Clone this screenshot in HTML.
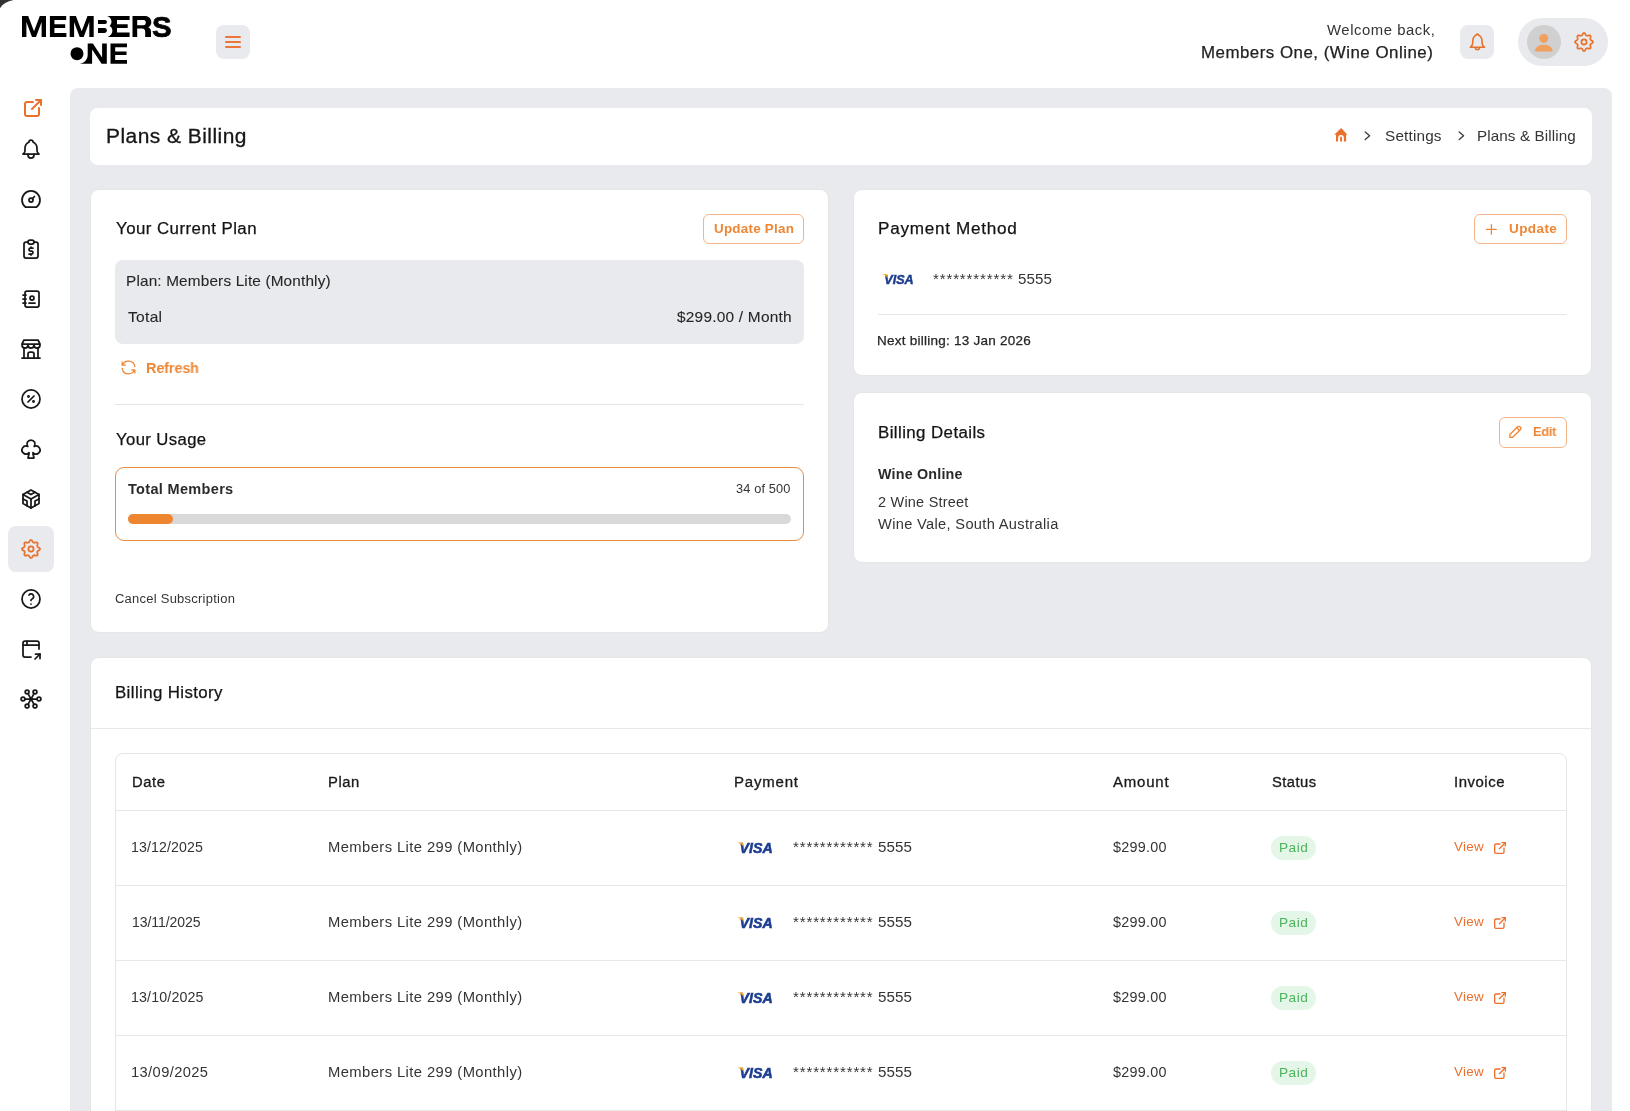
<!DOCTYPE html><html><head><meta charset="utf-8"><style>
html,body{margin:0;padding:0;}
body{width:1630px;height:1111px;overflow:hidden;position:relative;background:#fff;font-family:"Liberation Sans",sans-serif;}
.t{position:absolute;white-space:nowrap;font-family:"Liberation Sans",sans-serif;will-change:transform;}
.ic{position:absolute;overflow:visible;}
.box{position:absolute;box-sizing:border-box;}
</style></head><body>
<svg style="position:absolute;left:0;top:0;width:20px;height:12px" viewBox="0 0 20 12"><path d="M0 0H13.5C7 1.2 2.5 4 0 8.3Z" fill="#333"/></svg>
<div class="box" style="left:70px;top:88px;width:1542px;height:1100px;background:#E9EAEE;border-radius:8px;"></div>
<div class="box" style="left:90px;top:108px;width:1502px;height:57px;background:#fff;border-radius:8px;"></div>
<div class="box" style="left:90px;top:189px;width:739px;height:444px;background:#fff;border:1px solid #E6E6E6;border-radius:9px;"></div>
<div class="box" style="left:853px;top:189px;width:739px;height:187px;background:#fff;border:1px solid #E6E6E6;border-radius:9px;"></div>
<div class="box" style="left:853px;top:392px;width:739px;height:171px;background:#fff;border:1px solid #E6E6E6;border-radius:9px;"></div>
<div class="box" style="left:90px;top:657px;width:1502px;height:600px;background:#fff;border:1px solid #E6E6E6;border-radius:9px;"></div>
<div class="box" style="left:91px;top:728px;width:1500px;height:1px;background:#E8E8E8;"></div>
<div class="box" style="left:115px;top:753px;width:1452px;height:600px;border:1px solid #E6E6E6;border-radius:8px;"></div>
<div class="box" style="left:116px;top:810px;width:1450px;height:1px;background:#E8E8E8;"></div>
<div class="box" style="left:116px;top:885px;width:1450px;height:1px;background:#E8E8E8;"></div>
<div class="box" style="left:116px;top:960px;width:1450px;height:1px;background:#E8E8E8;"></div>
<div class="box" style="left:116px;top:1035px;width:1450px;height:1px;background:#E8E8E8;"></div>
<div class="box" style="left:116px;top:1110px;width:1450px;height:1px;background:#E8E8E8;"></div>
<div class="box" style="left:216px;top:25px;width:34px;height:34px;background:#E9EAEE;border-radius:8px;"></div>
<div class="box" style="left:225.3px;top:36px;width:15.5px;height:2px;background:#EA7639;border-radius:1px;"></div>
<div class="box" style="left:225.3px;top:41px;width:15.5px;height:2px;background:#EA7639;border-radius:1px;"></div>
<div class="box" style="left:225.3px;top:46px;width:15.5px;height:2px;background:#EA7639;border-radius:1px;"></div>
<div class="box" style="left:1460px;top:25px;width:34px;height:34px;background:#E9EAEE;border-radius:8px;"></div>
<svg class="ic" style="left:1467px;top:32px;width:20px;height:20px" viewBox="0 0 20 20" fill="none" stroke="#E9712B" stroke-width="1.6" stroke-linecap="round" stroke-linejoin="round"><path d="M10.40 2.00 C8.80 3.14 7.12 4.09 6.45 5.80 C5.70 7.61 5.61 9.31 5.61 11.69 C5.61 13.21 4.35 14.16 3.34 15.30 H17.46 C16.45 14.16 15.19 13.21 15.19 11.69 C15.19 9.31 15.10 7.61 14.35 5.80 C13.68 4.09 12.00 3.14 10.40 2.00 Z"/><path d="M8.05 15.49 C8.38 16.91 9.22 17.67 10.40 17.67 C11.58 17.67 12.42 16.91 12.75 15.49"/></svg>
<div class="box" style="left:1518px;top:18px;width:90px;height:48px;background:#E9EAEE;border-radius:24px;"></div>
<div class="box" style="left:1527px;top:25px;width:34px;height:34px;background:#D0D0D0;border-radius:50%;"></div>
<svg class="ic" style="left:1534px;top:32px;width:20px;height:20px" viewBox="0 0 20 20"><circle cx="9.8" cy="6.4" r="4.5" fill="#F0A05E"/><path d="M1 19.4C1 15 4.6 12.7 9.8 12.7S18.6 15 18.6 19.4Z" fill="#F0A05E"/></svg>
<svg class="ic" style="left:1572px;top:30px;width:24px;height:24px" viewBox="0 0 24 24" fill="none" stroke="#E9712B" stroke-width="1.7" stroke-linecap="round" stroke-linejoin="round"><path d="M12.00 3.00L12.35 3.07L12.69 3.28L12.99 3.60L13.27 3.99L13.51 4.40L13.73 4.78L13.95 5.10L14.16 5.34L14.39 5.51L14.64 5.63L14.90 5.72L15.18 5.76L15.50 5.74L15.88 5.67L16.31 5.55L16.77 5.44L17.23 5.36L17.68 5.35L18.06 5.44L18.36 5.64L18.56 5.94L18.65 6.32L18.64 6.77L18.56 7.23L18.45 7.69L18.33 8.12L18.26 8.50L18.24 8.82L18.28 9.10L18.37 9.36L18.49 9.61L18.66 9.84L18.90 10.05L19.22 10.27L19.60 10.49L20.01 10.73L20.40 11.01L20.72 11.31L20.93 11.65L21.00 12.00L20.93 12.35L20.72 12.69L20.40 12.99L20.01 13.27L19.60 13.51L19.22 13.73L18.90 13.95L18.66 14.16L18.49 14.39L18.37 14.64L18.28 14.90L18.24 15.18L18.26 15.50L18.33 15.88L18.45 16.31L18.56 16.77L18.64 17.23L18.65 17.68L18.56 18.06L18.36 18.36L18.06 18.56L17.68 18.65L17.23 18.64L16.77 18.56L16.31 18.45L15.88 18.33L15.50 18.26L15.18 18.24L14.90 18.28L14.64 18.37L14.39 18.49L14.16 18.66L13.95 18.90L13.73 19.22L13.51 19.60L13.27 20.01L12.99 20.40L12.69 20.72L12.35 20.93L12.00 21.00L11.65 20.93L11.31 20.72L11.01 20.40L10.73 20.01L10.49 19.60L10.27 19.22L10.05 18.90L9.84 18.66L9.61 18.49L9.36 18.37L9.10 18.28L8.82 18.24L8.50 18.26L8.12 18.33L7.69 18.45L7.23 18.56L6.77 18.64L6.32 18.65L5.94 18.56L5.64 18.36L5.44 18.06L5.35 17.68L5.36 17.23L5.44 16.77L5.55 16.31L5.67 15.88L5.74 15.50L5.76 15.18L5.72 14.90L5.63 14.64L5.51 14.39L5.34 14.16L5.10 13.95L4.78 13.73L4.40 13.51L3.99 13.27L3.60 12.99L3.28 12.69L3.07 12.35L3.00 12.00L3.07 11.65L3.28 11.31L3.60 11.01L3.99 10.73L4.40 10.49L4.78 10.27L5.10 10.05L5.34 9.84L5.51 9.61L5.63 9.36L5.72 9.10L5.76 8.82L5.74 8.50L5.67 8.12L5.55 7.69L5.44 7.23L5.36 6.77L5.35 6.32L5.44 5.94L5.64 5.64L5.94 5.44L6.32 5.35L6.77 5.36L7.23 5.44L7.69 5.55L8.12 5.67L8.50 5.74L8.82 5.76L9.10 5.72L9.36 5.63L9.61 5.51L9.84 5.34L10.05 5.10L10.27 4.78L10.49 4.40L10.73 3.99L11.01 3.60L11.31 3.28L11.65 3.07Z"/><circle cx="12" cy="12" r="2.6"/></svg>
<svg class="ic" style="left:0;top:0;width:200px;height:80px;will-change:transform" viewBox="0 0 200 80">
<g fill="#000">
<path d="M22 16h6.2l5.8 15.2l5.8-15.2h6.2v21h-4.4v-15l-5.6 15h-4l-5.6-15v15h-4.4z"/>
<path d="M49.9 16h16.3v3.9h-11.8v4.4h10.8v3.7h-10.8v5.1h12v3.9h-16.5z"/>
<path d="M69.7 16h6.2l5.8 15.2l5.8-15.2h6.2v21h-4.4v-15l-5.6 15h-4l-5.6-15v15h-4.4z"/>
<path d="M98 20.1H105A1.95 1.95 0 0 1 105 24H98Z"/>
<path d="M98 28.1H104.5A2.4 2.4 0 0 1 104.5 32.9H98Z"/>
<path d="M107 16H129.6V20.1H117V24.3H127.7V28H117V32.5H129.6V37H107.5C110.5 36 112.4 33.5 112.4 30.8C112.4 28.5 111.2 26.8 109.6 26C110.8 25 111.5 23.5 111.5 21.8C111.5 18.8 109.5 16.5 107 16Z"/>
</g>
<path fill-rule="evenodd" d="M132.5 16.1H144.5C148.8 16.1 151.3 18.8 151.3 22.2C151.3 24.6 150 26.4 148.2 27.3C150.1 28.1 151 29.6 151 31.8V36.9H145.2V32.2C145.2 29.9 144.4 28.6 141.8 28.6H137.2V36.9H132.5ZM137.2 20H143.8C145.2 20 145.8 21.2 145.8 22.6C145.8 24.1 145 25.3 143.6 25.3H137.2Z"/><text x="152" y="37" font-family="Liberation Sans" font-weight="700" font-size="29.2" fill="#000" stroke="#000" stroke-width="0.7" textLength="19.6" lengthAdjust="spacingAndGlyphs">S</text>
<circle cx="77" cy="53.7" r="6.5" fill="#000"/>
<path d="M87.7 43.4H92.9L102.1 57.4V43.4H106.8V63.8H101.6L92.1 49.6V63.8H80C84.6 63 87.7 59.3 87.7 54.8Z" fill="#000"/>
<path d="M110.5 43.4H127V47.3H115.2V51.4H126.5V55H115.2V60H127V63.8H110.5Z" fill="#000"/>
</svg>
<svg class="ic" style="left:21px;top:96px;width:24px;height:24px" viewBox="0 0 24 24" fill="none" stroke="#E9712B" stroke-width="2" stroke-linecap="round" stroke-linejoin="round"><path d="M12 6h-6a2 2 0 0 0 -2 2v10a2 2 0 0 0 2 2h10a2 2 0 0 0 2 -2v-6"/><path d="M11 13l9 -9"/><path d="M15 4h5v5"/></svg>
<div class="box" style="left:8px;top:526px;width:46px;height:46px;background:#E9EAEE;border-radius:8px;"></div>
<svg class="ic" style="left:19px;top:137px;width:24px;height:24px" viewBox="0 0 24 24" fill="none" stroke="#181818" stroke-width="1.75" stroke-linecap="round" stroke-linejoin="round"><path d="M10 5a2 2 0 1 1 4 0a7 7 0 0 1 4 6v3a4 4 0 0 0 2 3h-16a4 4 0 0 0 2 -3v-3a7 7 0 0 1 4 -6"/><path d="M9 17v1a3 3 0 0 0 6 0v-1"/></svg>
<svg class="ic" style="left:19px;top:187px;width:24px;height:24px" viewBox="0 0 24 24" fill="none" stroke="#181818" stroke-width="1.75" stroke-linecap="round" stroke-linejoin="round"><path d="M12 13m-2 0a2 2 0 1 0 4 0a2 2 0 1 0 -4 0"/><path d="M13.45 11.55l2.05 -2.05"/><path d="M6.4 20a9 9 0 1 1 11.2 0z"/></svg>
<svg class="ic" style="left:19px;top:237px;width:24px;height:24px" viewBox="0 0 24 24" fill="none" stroke="#181818" stroke-width="1.75" stroke-linecap="round" stroke-linejoin="round"><path d="M9 5h-2a2 2 0 0 0 -2 2v12a2 2 0 0 0 2 2h10a2 2 0 0 0 2 -2v-12a2 2 0 0 0 -2 -2h-2"/><path d="M9 5a2 2 0 0 1 2 -2h2a2 2 0 0 1 2 2v0a2 2 0 0 1 -2 2h-2a2 2 0 0 1 -2 -2z"/><path d="M14 11h-2.5a1.5 1.5 0 0 0 0 3h1a1.5 1.5 0 0 1 0 3h-2.5"/><path d="M12 17v1m0 -8v1"/></svg>
<svg class="ic" style="left:19px;top:287px;width:24px;height:24px" viewBox="0 0 24 24" fill="none" stroke="#181818" stroke-width="1.75" stroke-linecap="round" stroke-linejoin="round"><path d="M20 6v12a2 2 0 0 1 -2 2h-10a2 2 0 0 1 -2 -2v-12a2 2 0 0 1 2 -2h10a2 2 0 0 1 2 2z"/><path d="M10 16h6"/><path d="M13 11m-2 0a2 2 0 1 0 4 0a2 2 0 1 0 -4 0"/><path d="M4 8h3"/><path d="M4 12h3"/><path d="M4 16h3"/></svg>
<svg class="ic" style="left:19px;top:337px;width:24px;height:24px" viewBox="0 0 24 24" fill="none" stroke="#181818" stroke-width="1.75" stroke-linecap="round" stroke-linejoin="round"><path d="M3 21l18 0"/><path d="M3 7v1a3 3 0 0 0 6 0v-1m0 1a3 3 0 0 0 6 0v-1m0 1a3 3 0 0 0 6 0v-1h-18l2 -4h14l2 4"/><path d="M5 21l0 -10.15"/><path d="M19 21l0 -10.15"/><path d="M9 21v-4a2 2 0 0 1 2 -2h2a2 2 0 0 1 2 2v4"/></svg>
<svg class="ic" style="left:19px;top:387px;width:24px;height:24px" viewBox="0 0 24 24" fill="none" stroke="#181818" stroke-width="1.75" stroke-linecap="round" stroke-linejoin="round"><path d="M9 15l6 -6"/><circle cx="9.5" cy="9.5" r=".6" fill="currentColor"/><circle cx="14.5" cy="14.5" r=".6" fill="currentColor"/><path d="M12 12m-9 0a9 9 0 1 0 18 0a9 9 0 1 0 -18 0"/></svg>
<svg class="ic" style="left:19px;top:437px;width:24px;height:24px" viewBox="0 0 24 24" fill="none" stroke="#181818" stroke-width="1.75" stroke-linecap="round" stroke-linejoin="round"><path d="M12 3a4 4 0 0 1 3.164 6.447a4 4 0 1 1 -1.164 6.198v1.355l1 4h-6l1 -4l0 -1.355a4 4 0 1 1 -1.164 -6.199a4 4 0 0 1 3.163 -6.446z"/></svg>
<svg class="ic" style="left:19px;top:487px;width:24px;height:24px" viewBox="0 0 24 24" fill="none" stroke="#181818" stroke-width="1.75" stroke-linecap="round" stroke-linejoin="round"><path d="M20 7.5v9l-4 2.25l-4 2.25l-4 -2.25l-4 -2.25v-9l4 -2.25l4 -2.25l4 2.25z"/><path d="M12 12l4 -2.25l4 -2.25"/><path d="M12 12l0 9"/><path d="M12 12l-4 -2.25l-4 -2.25"/><path d="M20 12l-4 2v4.75"/><path d="M4 12l4 2l0 4.75"/><path d="M8 5.25l4 2.25l4 -2.25"/></svg>
<svg class="ic" style="left:19px;top:537px;width:24px;height:24px" viewBox="0 0 24 24" fill="none" stroke="#E9712B" stroke-width="1.75" stroke-linecap="round" stroke-linejoin="round"><path d="M12.00 3.00L12.35 3.07L12.69 3.28L12.99 3.60L13.27 3.99L13.51 4.40L13.73 4.78L13.95 5.10L14.16 5.34L14.39 5.51L14.64 5.63L14.90 5.72L15.18 5.76L15.50 5.74L15.88 5.67L16.31 5.55L16.77 5.44L17.23 5.36L17.68 5.35L18.06 5.44L18.36 5.64L18.56 5.94L18.65 6.32L18.64 6.77L18.56 7.23L18.45 7.69L18.33 8.12L18.26 8.50L18.24 8.82L18.28 9.10L18.37 9.36L18.49 9.61L18.66 9.84L18.90 10.05L19.22 10.27L19.60 10.49L20.01 10.73L20.40 11.01L20.72 11.31L20.93 11.65L21.00 12.00L20.93 12.35L20.72 12.69L20.40 12.99L20.01 13.27L19.60 13.51L19.22 13.73L18.90 13.95L18.66 14.16L18.49 14.39L18.37 14.64L18.28 14.90L18.24 15.18L18.26 15.50L18.33 15.88L18.45 16.31L18.56 16.77L18.64 17.23L18.65 17.68L18.56 18.06L18.36 18.36L18.06 18.56L17.68 18.65L17.23 18.64L16.77 18.56L16.31 18.45L15.88 18.33L15.50 18.26L15.18 18.24L14.90 18.28L14.64 18.37L14.39 18.49L14.16 18.66L13.95 18.90L13.73 19.22L13.51 19.60L13.27 20.01L12.99 20.40L12.69 20.72L12.35 20.93L12.00 21.00L11.65 20.93L11.31 20.72L11.01 20.40L10.73 20.01L10.49 19.60L10.27 19.22L10.05 18.90L9.84 18.66L9.61 18.49L9.36 18.37L9.10 18.28L8.82 18.24L8.50 18.26L8.12 18.33L7.69 18.45L7.23 18.56L6.77 18.64L6.32 18.65L5.94 18.56L5.64 18.36L5.44 18.06L5.35 17.68L5.36 17.23L5.44 16.77L5.55 16.31L5.67 15.88L5.74 15.50L5.76 15.18L5.72 14.90L5.63 14.64L5.51 14.39L5.34 14.16L5.10 13.95L4.78 13.73L4.40 13.51L3.99 13.27L3.60 12.99L3.28 12.69L3.07 12.35L3.00 12.00L3.07 11.65L3.28 11.31L3.60 11.01L3.99 10.73L4.40 10.49L4.78 10.27L5.10 10.05L5.34 9.84L5.51 9.61L5.63 9.36L5.72 9.10L5.76 8.82L5.74 8.50L5.67 8.12L5.55 7.69L5.44 7.23L5.36 6.77L5.35 6.32L5.44 5.94L5.64 5.64L5.94 5.44L6.32 5.35L6.77 5.36L7.23 5.44L7.69 5.55L8.12 5.67L8.50 5.74L8.82 5.76L9.10 5.72L9.36 5.63L9.61 5.51L9.84 5.34L10.05 5.10L10.27 4.78L10.49 4.40L10.73 3.99L11.01 3.60L11.31 3.28L11.65 3.07Z"/><circle cx="12" cy="12" r="2.6"/></svg>
<svg class="ic" style="left:19px;top:587px;width:24px;height:24px" viewBox="0 0 24 24" fill="none" stroke="#181818" stroke-width="1.75" stroke-linecap="round" stroke-linejoin="round"><path d="M12 12m-9 0a9 9 0 1 0 18 0a9 9 0 1 0 -18 0"/><path d="M12 17l0 .01"/><path d="M12 13.5a1.5 1.5 0 0 1 1 -1.5a2.6 2.6 0 1 0 -3 -4"/></svg>
<svg class="ic" style="left:19px;top:637px;width:24px;height:24px" viewBox="0 0 24 24" fill="none" stroke="#181818" stroke-width="1.75" stroke-linecap="round" stroke-linejoin="round"><path d="M4 8h16"/><path d="M12 20h-6a2 2 0 0 1 -2 -2v-12a2 2 0 0 1 2 -2h12a2 2 0 0 1 2 2v6"/><path d="M8 4v4"/><path d="M16 22l5 -5"/><path d="M21 21.5v-4.5h-4.5"/></svg>
<svg class="ic" style="left:19px;top:687px;width:24px;height:24px" viewBox="0 0 24 24" fill="none" stroke="#181818" stroke-width="1.75" stroke-linecap="round" stroke-linejoin="round"><circle cx="8.1" cy="4.9" r="1.9"/><circle cx="16" cy="4.9" r="1.9"/><circle cx="4" cy="12" r="1.9"/><circle cx="20" cy="12" r="1.9"/><circle cx="8.1" cy="19.1" r="1.9"/><circle cx="16" cy="19.1" r="1.9"/><circle cx="12" cy="12" r="1"/><path d="M11.52 11.12L9.01 6.57"/><path d="M12.49 11.13L15.07 6.56"/><path d="M11.00 12.00L5.90 12.00"/><path d="M13.00 12.00L18.10 12.00"/><path d="M11.52 12.88L9.01 17.43"/><path d="M12.49 12.87L15.07 17.44"/></svg>
<svg class="ic" style="left:1333px;top:127px;width:16px;height:16px" viewBox="0 0 16 16"><path fill-rule="evenodd" d="M8.2 1L1.2 7.7H3V14.6H13.1V7.7H14.4ZM5.1 14.6V11A2.9 2.9 0 0 1 10.9 11V14.6ZM7.1 14.6V10.5A0.95 0.95 0 0 1 9 10.5V14.6Z" fill="#E9712B"/></svg>
<svg class="ic" style="left:1362px;top:131px;width:10px;height:10px" viewBox="0 0 10 10" fill="none" stroke="#3A3A3A" stroke-width="1.3" stroke-linecap="round" stroke-linejoin="round"><path d="M3.2 0.9L7.6 4.8L3.2 8.6"/></svg>
<svg class="ic" style="left:1456px;top:131px;width:10px;height:10px" viewBox="0 0 10 10" fill="none" stroke="#3A3A3A" stroke-width="1.3" stroke-linecap="round" stroke-linejoin="round"><path d="M3.2 0.9L7.6 4.8L3.2 8.6"/></svg>
<div class="box" style="left:703px;top:214px;width:101px;height:30px;border:1px solid #F4B48A;border-radius:6px;"></div>
<div class="box" style="left:115px;top:260px;width:689px;height:84px;background:#E9EAEE;border-radius:8px;"></div>
<svg class="ic" style="left:118.5px;top:358px;width:19px;height:19px" viewBox="0 0 24 24" fill="none" stroke="#EE8633" stroke-width="1.6" stroke-linecap="round" stroke-linejoin="round"><path d="M20 11a8.1 8.1 0 0 0 -15.5 -2m-.5 -4v4h4"/><path d="M4 13a8.1 8.1 0 0 0 15.5 2m.5 4v-4h-4"/></svg>
<div class="box" style="left:115px;top:404px;width:689px;height:1px;background:#E6E6E6;"></div>
<div class="box" style="left:115px;top:467px;width:689px;height:74px;border:1px solid #EE8A3A;border-radius:9px;"></div>
<div class="box" style="left:128px;top:514px;width:663px;height:10px;background:#D9D9D9;border-radius:5px;"></div>
<div class="box" style="left:128px;top:514px;width:45px;height:10px;background:#EE8630;border-radius:5px;"></div>
<div class="box" style="left:1474px;top:214px;width:93px;height:30px;border:1px solid #F4B48A;border-radius:6px;"></div>
<svg class="ic" style="left:1482.6px;top:220.6px;width:16.8px;height:16.8px" viewBox="0 0 24 24" fill="none" stroke="#EE8633" stroke-width="1.75" stroke-linecap="round" stroke-linejoin="round"><path d="M12 5l0 14"/><path d="M5 12l14 0"/></svg>
<svg class="ic" style="left:881.5px;top:273.6px;width:32.93px;height:10.68px;will-change:transform" viewBox="0 0 37 12"><text x="2.6" y="10.7" font-family="Liberation Sans" font-weight="700" font-style="italic" font-size="14.6" fill="#1B3C8F" stroke="#1B3C8F" stroke-width="0.55" textLength="33" lengthAdjust="spacingAndGlyphs">VISA</text><path d="M0.2 0.4 L5.6 0.4 L7.2 5.6 C6 3.2 3.5 1.5 0.2 0.4 Z" fill="#F2A91F"/></svg>
<div class="box" style="left:878px;top:314px;width:689px;height:1px;background:#E6E6E6;"></div>
<div class="box" style="left:1499px;top:417px;width:68px;height:31px;border:1px solid #F4B48A;border-radius:6px;"></div>
<svg class="ic" style="left:1506.6px;top:423.4px;width:17.2px;height:17.2px" viewBox="0 0 24 24" fill="none" stroke="#EE8633" stroke-width="1.85" stroke-linecap="round" stroke-linejoin="round"><path d="M4 20h4l10.5 -10.5a2.828 2.828 0 1 0 -4 -4l-10.5 10.5v4"/><path d="M13.5 6.5l4 4"/></svg>
<svg class="ic" style="left:737px;top:842.3px;width:37.00px;height:12.00px;will-change:transform" viewBox="0 0 37 12"><text x="2.6" y="10.7" font-family="Liberation Sans" font-weight="700" font-style="italic" font-size="14.6" fill="#1B3C8F" stroke="#1B3C8F" stroke-width="0.55" textLength="33" lengthAdjust="spacingAndGlyphs">VISA</text><path d="M0.2 0.4 L5.6 0.4 L7.2 5.6 C6 3.2 3.5 1.5 0.2 0.4 Z" fill="#F2A91F"/></svg>
<div class="box" style="left:1271px;top:836px;width:45px;height:24px;background:#E4F6E7;border-radius:12px;"></div>
<svg class="ic" style="left:1492px;top:840px;width:16px;height:16px" viewBox="0 0 24 24" fill="none" stroke="#EC6F2D" stroke-width="2" stroke-linecap="round" stroke-linejoin="round"><path d="M12 6h-6a2 2 0 0 0 -2 2v10a2 2 0 0 0 2 2h10a2 2 0 0 0 2 -2v-6"/><path d="M11 13l9 -9"/><path d="M15 4h5v5"/></svg>
<svg class="ic" style="left:737px;top:917.3px;width:37.00px;height:12.00px;will-change:transform" viewBox="0 0 37 12"><text x="2.6" y="10.7" font-family="Liberation Sans" font-weight="700" font-style="italic" font-size="14.6" fill="#1B3C8F" stroke="#1B3C8F" stroke-width="0.55" textLength="33" lengthAdjust="spacingAndGlyphs">VISA</text><path d="M0.2 0.4 L5.6 0.4 L7.2 5.6 C6 3.2 3.5 1.5 0.2 0.4 Z" fill="#F2A91F"/></svg>
<div class="box" style="left:1271px;top:911px;width:45px;height:24px;background:#E4F6E7;border-radius:12px;"></div>
<svg class="ic" style="left:1492px;top:915px;width:16px;height:16px" viewBox="0 0 24 24" fill="none" stroke="#EC6F2D" stroke-width="2" stroke-linecap="round" stroke-linejoin="round"><path d="M12 6h-6a2 2 0 0 0 -2 2v10a2 2 0 0 0 2 2h10a2 2 0 0 0 2 -2v-6"/><path d="M11 13l9 -9"/><path d="M15 4h5v5"/></svg>
<svg class="ic" style="left:737px;top:992.3px;width:37.00px;height:12.00px;will-change:transform" viewBox="0 0 37 12"><text x="2.6" y="10.7" font-family="Liberation Sans" font-weight="700" font-style="italic" font-size="14.6" fill="#1B3C8F" stroke="#1B3C8F" stroke-width="0.55" textLength="33" lengthAdjust="spacingAndGlyphs">VISA</text><path d="M0.2 0.4 L5.6 0.4 L7.2 5.6 C6 3.2 3.5 1.5 0.2 0.4 Z" fill="#F2A91F"/></svg>
<div class="box" style="left:1271px;top:986px;width:45px;height:24px;background:#E4F6E7;border-radius:12px;"></div>
<svg class="ic" style="left:1492px;top:990px;width:16px;height:16px" viewBox="0 0 24 24" fill="none" stroke="#EC6F2D" stroke-width="2" stroke-linecap="round" stroke-linejoin="round"><path d="M12 6h-6a2 2 0 0 0 -2 2v10a2 2 0 0 0 2 2h10a2 2 0 0 0 2 -2v-6"/><path d="M11 13l9 -9"/><path d="M15 4h5v5"/></svg>
<svg class="ic" style="left:737px;top:1067.3px;width:37.00px;height:12.00px;will-change:transform" viewBox="0 0 37 12"><text x="2.6" y="10.7" font-family="Liberation Sans" font-weight="700" font-style="italic" font-size="14.6" fill="#1B3C8F" stroke="#1B3C8F" stroke-width="0.55" textLength="33" lengthAdjust="spacingAndGlyphs">VISA</text><path d="M0.2 0.4 L5.6 0.4 L7.2 5.6 C6 3.2 3.5 1.5 0.2 0.4 Z" fill="#F2A91F"/></svg>
<div class="box" style="left:1271px;top:1061px;width:45px;height:24px;background:#E4F6E7;border-radius:12px;"></div>
<svg class="ic" style="left:1492px;top:1065px;width:16px;height:16px" viewBox="0 0 24 24" fill="none" stroke="#EC6F2D" stroke-width="2" stroke-linecap="round" stroke-linejoin="round"><path d="M12 6h-6a2 2 0 0 0 -2 2v10a2 2 0 0 0 2 2h10a2 2 0 0 0 2 -2v-6"/><path d="M11 13l9 -9"/><path d="M15 4h5v5"/></svg>
<div class="t" style="left:1327.00px;top:23px;font-size:14px;line-height:14px;font-weight:400;color:#343434;letter-spacing:0.519px;transform:scale(1.0618,1.0000);transform-origin:0 12px;">Welcome back,</div>
<div class="t" style="left:1200.95px;top:45px;font-size:16px;line-height:16px;font-weight:400;color:#222222;letter-spacing:0.473px;transform:scale(1.0541,1.0000);transform-origin:0 13px;-webkit-text-stroke:0.25px currentColor;">Members One, (Wine Online)</div>
<div class="t" style="left:105.95px;top:126px;font-size:20px;line-height:20px;font-weight:400;color:#161616;letter-spacing:0.446px;transform:scale(1.0473,1.0000);transform-origin:0 17px;-webkit-text-stroke:0.3px currentColor;">Plans &amp; Billing</div>
<div class="t" style="left:1385.00px;top:128px;font-size:15px;line-height:15px;font-weight:400;color:#343434;letter-spacing:0.164px;transform:scale(1.0210,1.0000);transform-origin:0 13px;">Settings</div>
<div class="t" style="left:1477.39px;top:128px;font-size:15px;line-height:15px;font-weight:400;color:#343434;letter-spacing:0.099px;transform:scale(1.0144,1.0000);transform-origin:0 13px;">Plans &amp; Billing</div>
<div class="t" style="left:115.60px;top:221px;font-size:16px;line-height:16px;font-weight:400;color:#141414;letter-spacing:0.435px;transform:scale(1.0524,1.0000);transform-origin:0 13px;-webkit-text-stroke:0.25px currentColor;">Your Current Plan</div>
<div class="t" style="left:713.90px;top:222px;font-size:13px;line-height:13px;font-weight:700;color:#EE8633;letter-spacing:0.236px;transform:scale(1.0304,1.0000);transform-origin:0 11px;">Update Plan</div>
<div class="t" style="left:126.38px;top:273px;font-size:15px;line-height:15px;font-weight:400;color:#262626;letter-spacing:0.161px;transform:scale(1.0218,1.0000);transform-origin:0 13px;-webkit-text-stroke:0.1px currentColor;">Plan: Members Lite (Monthly)</div>
<div class="t" style="left:127.70px;top:309px;font-size:15px;line-height:15px;font-weight:400;color:#262626;letter-spacing:0.293px;transform:scale(1.0361,1.0000);transform-origin:0 13px;-webkit-text-stroke:0.1px currentColor;">Total</div>
<div class="t" style="left:677.00px;top:309px;font-size:15px;line-height:15px;font-weight:400;color:#262626;letter-spacing:0.219px;transform:scale(1.0276,1.0000);transform-origin:0 13px;-webkit-text-stroke:0.1px currentColor;">$299.00 / Month</div>
<div class="t" style="left:145.80px;top:361px;font-size:14.5px;line-height:14.5px;font-weight:700;color:#EE8633;letter-spacing:-0.086px;transform:scale(0.9902,1.0000);transform-origin:0 12px;">Refresh</div>
<div class="t" style="left:115.80px;top:432px;font-size:16px;line-height:16px;font-weight:400;color:#141414;letter-spacing:0.393px;transform:scale(1.0408,1.0000);transform-origin:0 13px;-webkit-text-stroke:0.25px currentColor;">Your Usage</div>
<div class="t" style="left:128.40px;top:482px;font-size:14px;line-height:14px;font-weight:700;color:#2A2A2A;letter-spacing:0.309px;transform:scale(1.0365,1.0000);transform-origin:0 12px;">Total Members</div>
<div class="t" style="left:735.80px;top:483px;font-size:12.5px;line-height:12.5px;font-weight:400;color:#343434;letter-spacing:0.145px;transform:scale(1.0218,1.0000);transform-origin:0 10px;">34 of 500</div>
<div class="t" style="left:115.30px;top:593px;font-size:12.5px;line-height:12.5px;font-weight:400;color:#343434;letter-spacing:0.241px;transform:scale(1.0376,1.0000);transform-origin:0 10px;">Cancel Subscription</div>
<div class="t" style="left:877.73px;top:221px;font-size:16px;line-height:16px;font-weight:400;color:#141414;letter-spacing:0.683px;transform:scale(1.0694,1.0000);transform-origin:0 13px;-webkit-text-stroke:0.25px currentColor;">Payment Method</div>
<div class="t" style="left:1509.00px;top:222px;font-size:13px;line-height:13px;font-weight:700;color:#EE8633;letter-spacing:0.377px;transform:scale(1.0412,1.0000);transform-origin:0 11px;">Update</div>
<div class="t" style="left:932.90px;top:271px;font-size:15px;line-height:15px;font-weight:400;color:#343434;letter-spacing:0.881px;">************</div>
<div class="t" style="left:1018.20px;top:271px;font-size:15px;line-height:15px;font-weight:400;color:#343434;letter-spacing:0.096px;transform:scale(1.0086,1.0000);transform-origin:0 13px;">5555</div>
<div class="t" style="left:877.36px;top:334px;font-size:13px;line-height:13px;font-weight:400;color:#262626;letter-spacing:0.239px;transform:scale(1.0390,1.0000);transform-origin:0 11px;-webkit-text-stroke:0.25px currentColor;">Next billing: 13 Jan 2026</div>
<div class="t" style="left:877.85px;top:425px;font-size:16px;line-height:16px;font-weight:400;color:#141414;letter-spacing:0.391px;transform:scale(1.0545,1.0000);transform-origin:0 13px;-webkit-text-stroke:0.25px currentColor;">Billing Details</div>
<div class="t" style="left:1533.00px;top:425px;font-size:13px;line-height:13px;font-weight:700;color:#EE8633;letter-spacing:-0.204px;transform:scale(0.9751,1.0000);transform-origin:0 11px;">Edit</div>
<div class="t" style="left:878.30px;top:467px;font-size:14px;line-height:14px;font-weight:700;color:#2A2A2A;letter-spacing:0.186px;transform:scale(1.0225,1.0000);transform-origin:0 12px;">Wine Online</div>
<div class="t" style="left:878.30px;top:495px;font-size:14px;line-height:14px;font-weight:400;color:#343434;letter-spacing:0.232px;transform:scale(1.0318,1.0000);transform-origin:0 12px;">2 Wine Street</div>
<div class="t" style="left:878.30px;top:517px;font-size:14px;line-height:14px;font-weight:400;color:#343434;letter-spacing:0.312px;transform:scale(1.0449,1.0000);transform-origin:0 12px;">Wine Vale, South Australia</div>
<div class="t" style="left:114.75px;top:685px;font-size:16px;line-height:16px;font-weight:400;color:#141414;letter-spacing:0.374px;transform:scale(1.0518,1.0000);transform-origin:0 13px;-webkit-text-stroke:0.25px currentColor;">Billing History</div>
<div class="t" style="left:131.74px;top:775px;font-size:14px;line-height:14px;font-weight:400;color:#1A1A1A;letter-spacing:0.569px;transform:scale(1.0560,1.0000);transform-origin:0 12px;-webkit-text-stroke:0.3px currentColor;">Date</div>
<div class="t" style="left:328.14px;top:775px;font-size:14px;line-height:14px;font-weight:400;color:#1A1A1A;letter-spacing:0.528px;transform:scale(1.0569,1.0000);transform-origin:0 12px;-webkit-text-stroke:0.3px currentColor;">Plan</div>
<div class="t" style="left:733.53px;top:775px;font-size:14px;line-height:14px;font-weight:400;color:#1A1A1A;letter-spacing:0.720px;transform:scale(1.0736,1.0000);transform-origin:0 12px;-webkit-text-stroke:0.3px currentColor;">Payment</div>
<div class="t" style="left:1113.00px;top:775px;font-size:14px;line-height:14px;font-weight:400;color:#1A1A1A;letter-spacing:0.744px;transform:scale(1.0714,1.0000);transform-origin:0 12px;-webkit-text-stroke:0.3px currentColor;">Amount</div>
<div class="t" style="left:1271.80px;top:775px;font-size:14px;line-height:14px;font-weight:400;color:#1A1A1A;letter-spacing:0.431px;transform:scale(1.0515,1.0000);transform-origin:0 12px;-webkit-text-stroke:0.3px currentColor;">Status</div>
<div class="t" style="left:1454.04px;top:775px;font-size:14px;line-height:14px;font-weight:400;color:#1A1A1A;letter-spacing:0.502px;transform:scale(1.0647,1.0000);transform-origin:0 12px;-webkit-text-stroke:0.3px currentColor;">Invoice</div>
<div class="t" style="left:131.49px;top:840px;font-size:14px;line-height:14px;font-weight:400;color:#343434;letter-spacing:0.095px;transform:scale(1.0122,1.0000);transform-origin:0 12px;">13/12/2025</div>
<div class="t" style="left:328.15px;top:840px;font-size:14px;line-height:14px;font-weight:400;color:#343434;letter-spacing:0.395px;transform:scale(1.0542,1.0000);transform-origin:0 12px;">Members Lite 299 (Monthly)</div>
<div class="t" style="left:793.10px;top:839px;font-size:15px;line-height:15px;font-weight:400;color:#343434;letter-spacing:0.872px;">************</div>
<div class="t" style="left:878.40px;top:839px;font-size:15px;line-height:15px;font-weight:400;color:#343434;letter-spacing:0.112px;transform:scale(1.0101,1.0000);transform-origin:0 13px;">5555</div>
<div class="t" style="left:1113.00px;top:840px;font-size:14px;line-height:14px;font-weight:400;color:#343434;letter-spacing:0.232px;transform:scale(1.0266,1.0000);transform-origin:0 12px;">$299.00</div>
<div class="t" style="left:1278.75px;top:841px;font-size:13px;line-height:13px;font-weight:400;color:#4DB35E;letter-spacing:0.452px;transform:scale(1.0518,1.0000);transform-origin:0 11px;">Paid</div>
<div class="t" style="left:1453.70px;top:840px;font-size:13px;line-height:13px;font-weight:400;color:#EC6F2D;letter-spacing:0.291px;transform:scale(1.0297,1.0000);transform-origin:0 11px;">View</div>
<div class="t" style="left:131.51px;top:915px;font-size:14px;line-height:14px;font-weight:400;color:#343434;letter-spacing:-0.052px;transform:scale(0.9930,1.0000);transform-origin:0 12px;">13/11/2025</div>
<div class="t" style="left:328.15px;top:915px;font-size:14px;line-height:14px;font-weight:400;color:#343434;letter-spacing:0.395px;transform:scale(1.0542,1.0000);transform-origin:0 12px;">Members Lite 299 (Monthly)</div>
<div class="t" style="left:793.10px;top:914px;font-size:15px;line-height:15px;font-weight:400;color:#343434;letter-spacing:0.872px;">************</div>
<div class="t" style="left:878.40px;top:914px;font-size:15px;line-height:15px;font-weight:400;color:#343434;letter-spacing:0.112px;transform:scale(1.0101,1.0000);transform-origin:0 13px;">5555</div>
<div class="t" style="left:1113.00px;top:915px;font-size:14px;line-height:14px;font-weight:400;color:#343434;letter-spacing:0.232px;transform:scale(1.0266,1.0000);transform-origin:0 12px;">$299.00</div>
<div class="t" style="left:1278.75px;top:916px;font-size:13px;line-height:13px;font-weight:400;color:#4DB35E;letter-spacing:0.452px;transform:scale(1.0518,1.0000);transform-origin:0 11px;">Paid</div>
<div class="t" style="left:1453.70px;top:915px;font-size:13px;line-height:13px;font-weight:400;color:#EC6F2D;letter-spacing:0.291px;transform:scale(1.0297,1.0000);transform-origin:0 11px;">View</div>
<div class="t" style="left:131.48px;top:990px;font-size:14px;line-height:14px;font-weight:400;color:#343434;letter-spacing:0.134px;transform:scale(1.0171,1.0000);transform-origin:0 12px;">13/10/2025</div>
<div class="t" style="left:328.15px;top:990px;font-size:14px;line-height:14px;font-weight:400;color:#343434;letter-spacing:0.395px;transform:scale(1.0542,1.0000);transform-origin:0 12px;">Members Lite 299 (Monthly)</div>
<div class="t" style="left:793.10px;top:989px;font-size:15px;line-height:15px;font-weight:400;color:#343434;letter-spacing:0.872px;">************</div>
<div class="t" style="left:878.40px;top:989px;font-size:15px;line-height:15px;font-weight:400;color:#343434;letter-spacing:0.112px;transform:scale(1.0101,1.0000);transform-origin:0 13px;">5555</div>
<div class="t" style="left:1113.00px;top:990px;font-size:14px;line-height:14px;font-weight:400;color:#343434;letter-spacing:0.232px;transform:scale(1.0266,1.0000);transform-origin:0 12px;">$299.00</div>
<div class="t" style="left:1278.75px;top:991px;font-size:13px;line-height:13px;font-weight:400;color:#4DB35E;letter-spacing:0.452px;transform:scale(1.0518,1.0000);transform-origin:0 11px;">Paid</div>
<div class="t" style="left:1453.70px;top:990px;font-size:13px;line-height:13px;font-weight:400;color:#EC6F2D;letter-spacing:0.291px;transform:scale(1.0297,1.0000);transform-origin:0 11px;">View</div>
<div class="t" style="left:131.45px;top:1065px;font-size:14px;line-height:14px;font-weight:400;color:#343434;letter-spacing:0.384px;transform:scale(1.0476,1.0000);transform-origin:0 12px;">13/09/2025</div>
<div class="t" style="left:328.15px;top:1065px;font-size:14px;line-height:14px;font-weight:400;color:#343434;letter-spacing:0.395px;transform:scale(1.0542,1.0000);transform-origin:0 12px;">Members Lite 299 (Monthly)</div>
<div class="t" style="left:793.10px;top:1064px;font-size:15px;line-height:15px;font-weight:400;color:#343434;letter-spacing:0.872px;">************</div>
<div class="t" style="left:878.40px;top:1064px;font-size:15px;line-height:15px;font-weight:400;color:#343434;letter-spacing:0.112px;transform:scale(1.0101,1.0000);transform-origin:0 13px;">5555</div>
<div class="t" style="left:1113.00px;top:1065px;font-size:14px;line-height:14px;font-weight:400;color:#343434;letter-spacing:0.232px;transform:scale(1.0266,1.0000);transform-origin:0 12px;">$299.00</div>
<div class="t" style="left:1278.75px;top:1066px;font-size:13px;line-height:13px;font-weight:400;color:#4DB35E;letter-spacing:0.452px;transform:scale(1.0518,1.0000);transform-origin:0 11px;">Paid</div>
<div class="t" style="left:1453.70px;top:1065px;font-size:13px;line-height:13px;font-weight:400;color:#EC6F2D;letter-spacing:0.291px;transform:scale(1.0297,1.0000);transform-origin:0 11px;">View</div>
</body></html>
